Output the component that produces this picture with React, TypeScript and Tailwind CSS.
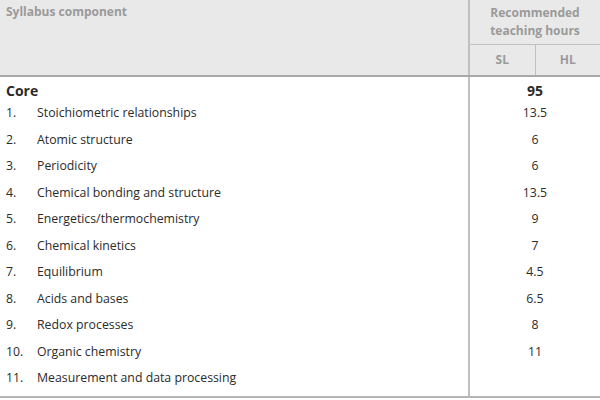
const rows: [string, string, string][] = [
  ["1.", "Stoichiometric relationships", "13.5"],
  ["2.", "Atomic structure", "6"],
  ["3.", "Periodicity", "6"],
  ["4.", "Chemical bonding and structure", "13.5"],
  ["5.", "Energetics/thermochemistry", "9"],
  ["6.", "Chemical kinetics", "7"],
  ["7.", "Equilibrium", "4.5"],
  ["8.", "Acids and bases", "6.5"],
  ["9.", "Redox processes", "8"],
  ["10.", "Organic chemistry", "11"],
  ["11.", "Measurement and data processing", ""],
];

export default function App() {
  return (
    <div className="w-[600px] h-[400px] bg-white text-[#2b2b2b] font-['Open_Sans',sans-serif] overflow-hidden">
      {/* header */}
      <div className="flex h-[77px] bg-[#e9e9e9] border-b-2 border-[#a8a8a8] text-[#9a9a9a] font-bold text-[12px]">
        <div className="flex-1 pl-[6px] pt-[3px]">Syllabus component</div>
        <div className="w-[132px] border-l-2 border-[#c0c0c0] flex flex-col">
          <div className="h-[45px] border-b border-[#c0c0c0] flex flex-col items-center justify-center leading-[18px]">
            <span>Recommended</span>
            <span>teaching hours</span>
          </div>
          <div className="flex-1 flex">
            <div className="flex-1 flex items-center justify-center border-r border-[#c0c0c0]">SL</div>
            <div className="flex-1 flex items-center justify-center">HL</div>
          </div>
        </div>
      </div>

      {/* body */}
      <div className="flex border-b-2 border-[#b5b5b5] h-[321px]">
        <div className="flex-1 pt-[4px]">
          <div className="h-[19px] pl-[6px] flex items-center font-bold text-[14px]">Core</div>
          {rows.map(([n, label]) => (
            <div key={n} className="h-[26.5px] flex items-center text-[12.3px]">
              <span className="w-[37px] pl-[6px]">{n}</span>
              <span>{label}</span>
            </div>
          ))}
        </div>
        <div className="w-[132px] border-l-2 border-[#c0c0c0] pt-[4px]">
          <div className="h-[19px] flex items-center justify-center font-bold text-[14px]">95</div>
          {rows.map(([n, , v]) => (
            <div key={n} className="h-[26.5px] flex items-center justify-center text-[12.3px]">
              {v}
            </div>
          ))}
        </div>
      </div>
    </div>
  );
}
